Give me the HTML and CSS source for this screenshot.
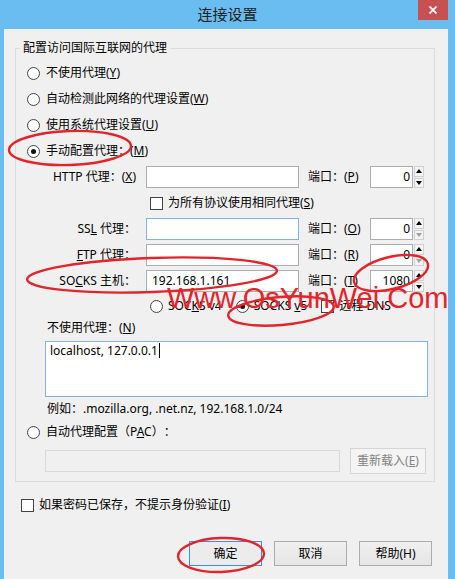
FILE: index.html
```html
<!DOCTYPE html>
<html lang="zh-CN">
<head>
  <meta charset="UTF-8" />
  <meta name="viewport" content="width=device-width, initial-scale=1" />
  <title>连接设置</title>
  <link rel="stylesheet" href="styles.css">
</head>
<body>
  <div class="window">
    <div class="titlebar">
      <span></span>
      <h1 class="title">连接设置</h1>
      <span class="close">
        <svg width="8" height="8" viewBox="0 0 8 8"><path d="M0.5 0.5L7.5 7.5M7.5 0.5L0.5 7.5" stroke="#fff" stroke-width="1.8"/></svg>
      </span>
    </div>

    <div class="content">
      <fieldset class="group">
        <legend>配置访问国际互联网的代理</legend>

        <div class="opt"><span class="radio"></span><span>不使用代理(<u>Y</u>)</span></div>
        <div class="opt"><span class="radio"></span><span>自动检测此网络的代理设置(<u>W</u>)</span></div>
        <div class="opt"><span class="radio"></span><span>使用系统代理设置(<u>U</u>)</span></div>
        <div class="opt"><span class="radio on"></span><span>手动配置代理：(<u>M</u>)</span></div>

        <div class="proxy">
          <span class="plabel">HTTP 代理：(<u>X</u>)</span>
          <span class="field host"></span>
          <span class="port-label">端口：(<u>P</u>)</span>
          <span class="field port">0</span>
          <span class="spin"><i class="up"></i><i class="down"></i></span>
        </div>
        <div class="proxy">
          <span class="same"><span class="check"></span><span>为所有协议使用相同代理(<u>S</u>)</span></span>
        </div>
        <div class="proxy">
          <span class="plabel">SS<u>L</u> 代理：</span>
          <span class="field host focus"></span>
          <span class="port-label">端口：(<u>O</u>)</span>
          <span class="field port">0</span>
          <span class="spin"><i class="up"></i><i class="down off"></i></span>
        </div>
        <div class="proxy">
          <span class="plabel"><u>F</u>TP 代理：</span>
          <span class="field host"></span>
          <span class="port-label">端口：(<u>R</u>)</span>
          <span class="field port">0</span>
          <span class="spin"><i class="up"></i><i class="down off"></i></span>
        </div>
        <div class="proxy">
          <span class="plabel">SO<u>C</u>KS 主机：</span>
          <span class="field host">192.168.1.161</span>
          <span class="port-label">端口：(<u>T</u>)</span>
          <span class="field port">1080</span>
          <span class="spin"><i class="up"></i><i class="down"></i></span>
        </div>
        <div class="socks">
          <span class="item"><span class="radio"></span><span>SOC<u>K</u>S v4</span></span>
          <span class="item v5"><span class="radio on"></span><span>SOCKS <u>v</u>5</span></span>
          <span class="item dns"><span class="check"></span><span>远程 DNS</span></span>
        </div>

        <div class="noproxy-label">不使用代理：(<u>N</u>)</div>
        <div class="textarea">localhost, 127.0.0.1<span class="caret"></span></div>
        <div class="hint">例如：.mozilla.org, .net.nz, 192.168.1.0/24</div>

        <div class="opt pac"><span class="radio"></span><span>自动代理配置（P<u>A</u>C）：</span></div>
        <div class="pac-row">
          <span class="field pac-url"></span>
          <span class="btn-off">重新载入(<u>E</u>)</span>
        </div>
      </fieldset>

      <div class="remember"><span class="check"></span><span>如果密码已保存，不提示身份验证(<u>I</u>)</span></div>

      <div class="actions">
        <span class="btn default">确定</span>
        <span class="btn">取消</span>
        <span class="btn">帮助(H)</span>
      </div>
    </div>

    <svg class="marks" width="455" height="579" viewBox="0 0 455 579">
      <g fill="none" stroke="#e2252b" stroke-width="2.4">
        <ellipse cx="70" cy="148" rx="61" ry="17" transform="rotate(-2 70 148)"/>
        <ellipse cx="152" cy="275" rx="125" ry="17" transform="rotate(-2 152 275)"/>
        <ellipse cx="391" cy="273" rx="38" ry="16" transform="rotate(-14 391 273)"/>
        <ellipse cx="281" cy="311" rx="53" ry="14" transform="rotate(-5 281 311)"/>
        <ellipse cx="221" cy="555" rx="43" ry="17" transform="rotate(-2 221 555)"/>
      </g>
      <text x="167" y="308" class="watermark">Www.OsYunWei.Com</text>
    </svg>
  </div>
</body>
</html>
```

FILE: styles.css
```css
* {
  box-sizing: border-box;
}
body {
  margin: 0;
  font-family: "Noto Sans", "Noto Sans CJK SC", sans-serif;
  font-size: 12px;
  line-height: 16px;
  color: #000;
  text-spacing-trim: space-all;
}
u {
  text-decoration: underline;
}
.window {
  position: relative;
  width: 455px;
  height: 579px;
  background: #6abdf0;
  display: flex;
  flex-direction: column;
  overflow: hidden;
}
.titlebar {
  height: 29px;
  display: grid;
  grid-template-columns: 1fr auto 1fr;
}
.title {
  margin: 0;
  font-family: "Noto Sans CJK SC", sans-serif;
  font-size: 15px;
  font-weight: normal;
  line-height: 28px;
  color: #222;
}
.close {
  justify-self: end;
  width: 30px;
  height: 20px;
  margin-right: 7px;
  background: #c75050;
  display: flex;
  align-items: center;
  justify-content: center;
}
.content {
  flex: 1;
  margin: 0 7px 0 4px;
  padding-top: 11px;
  background: #f0f0f0;
}
.group {
  margin: 0 0 0 11px;
  width: 420px;
  padding: 4px 0 5px;
  border: 1px solid #dcdcdc;
  min-width: 0;
}
.group legend {
  margin-left: 4px;
  padding: 0 3px;
}
.radio {
  flex: none;
  width: 13px;
  height: 13px;
  border: 1px solid #444;
  border-radius: 50%;
  background: #fff;
  display: flex;
  align-items: center;
  justify-content: center;
}
.radio.on::after {
  content: "";
  width: 5px;
  height: 5px;
  border-radius: 50%;
  background: #111;
}
.check {
  flex: none;
  width: 13px;
  height: 13px;
  border: 1px solid #444;
  background: #fff;
}
.opt {
  display: flex;
  align-items: center;
  gap: 6px;
  height: 26px;
  padding-left: 11px;
}
.proxy {
  display: flex;
  align-items: center;
  height: 26px;
}
.plabel {
  width: 120px;
  text-align: right;
}
.field {
  height: 22px;
  border: 1px solid #abadb3;
  background: #fff;
  line-height: 20px;
  white-space: nowrap;
}
.field.host {
  width: 153px;
  margin-left: 10px;
  padding-left: 5px;
}
.field.focus {
  border-color: #7eb4ea;
}
.port-label {
  width: 53px;
  margin-left: 9px;
  white-space: nowrap;
}
.field.port {
  width: 43px;
  margin-left: 9px;
  padding-right: 2px;
  text-align: right;
}
.spin {
  width: 10px;
  height: 22px;
  margin-left: 1px;
  display: flex;
  flex-direction: column;
  gap: 1px;
}
.spin i {
  flex: 1;
  border: 1px solid #d0d0d0;
  background: #f4f4f4;
  display: flex;
  align-items: center;
  justify-content: center;
}
.spin i::after {
  content: "";
  border-left: 3px solid transparent;
  border-right: 3px solid transparent;
}
.spin .up::after {
  border-bottom: 4px solid #000;
}
.spin .down::after {
  border-top: 4px solid #000;
}
.spin .down.off::after {
  border-top-color: #a0a0a0;
}
.same {
  display: flex;
  align-items: center;
  gap: 5px;
  margin-left: 134px;
}
.socks {
  display: flex;
  align-items: center;
  height: 24px;
  padding-left: 134px;
}
.socks .item {
  display: flex;
  align-items: center;
  gap: 5px;
}
.socks .v5 {
  margin-left: 14px;
}
.socks .dns {
  margin-left: 14px;
}
.noproxy-label {
  margin-top: 2px;
  padding-left: 31px;
}
.textarea {
  margin: 5px 0 0 29px;
  width: 383px;
  height: 56px;
  padding: 1px 4px;
  border: 1px solid #7eb4ea;
  background: #fff;
}
.caret {
  display: inline-block;
  width: 1px;
  height: 15px;
  margin-left: 1px;
  background: #000;
  vertical-align: -3px;
}
.hint {
  height: 23px;
  padding-left: 31px;
  line-height: 23px;
}
.opt.pac {
  height: 24px;
}
.pac-row {
  display: flex;
  align-items: center;
  height: 30px;
  margin-top: 2px;
  padding-left: 29px;
}
.field.pac-url {
  width: 295px;
  border-color: #d9d9d9;
  background: #f0f0f0;
}
.btn-off {
  width: 76px;
  height: 26px;
  margin-left: 10px;
  border: 1px solid #d5d5d5;
  background: #f4f4f4;
  color: #838383;
  line-height: 24px;
  text-align: center;
}
.remember {
  display: flex;
  align-items: center;
  gap: 5px;
  height: 20px;
  margin: 13px 0 0 17px;
}
.actions {
  display: flex;
  justify-content: flex-end;
  gap: 12px;
  margin-top: 26px;
  padding-right: 16px;
}
.btn {
  width: 73px;
  height: 25px;
  border: 1px solid #acacac;
  background: linear-gradient(#f0f0f0, #e5e5e5);
  line-height: 23px;
  text-align: center;
}
.btn.default {
  border-color: #3c8fe0;
  background: #ececec;
}
.marks {
  position: absolute;
  left: 0;
  top: 0;
  pointer-events: none;
}
.watermark {
  font-family: "Liberation Sans", Arial, sans-serif;
  font-size: 29px;
  fill: #e2252b;
}
```
